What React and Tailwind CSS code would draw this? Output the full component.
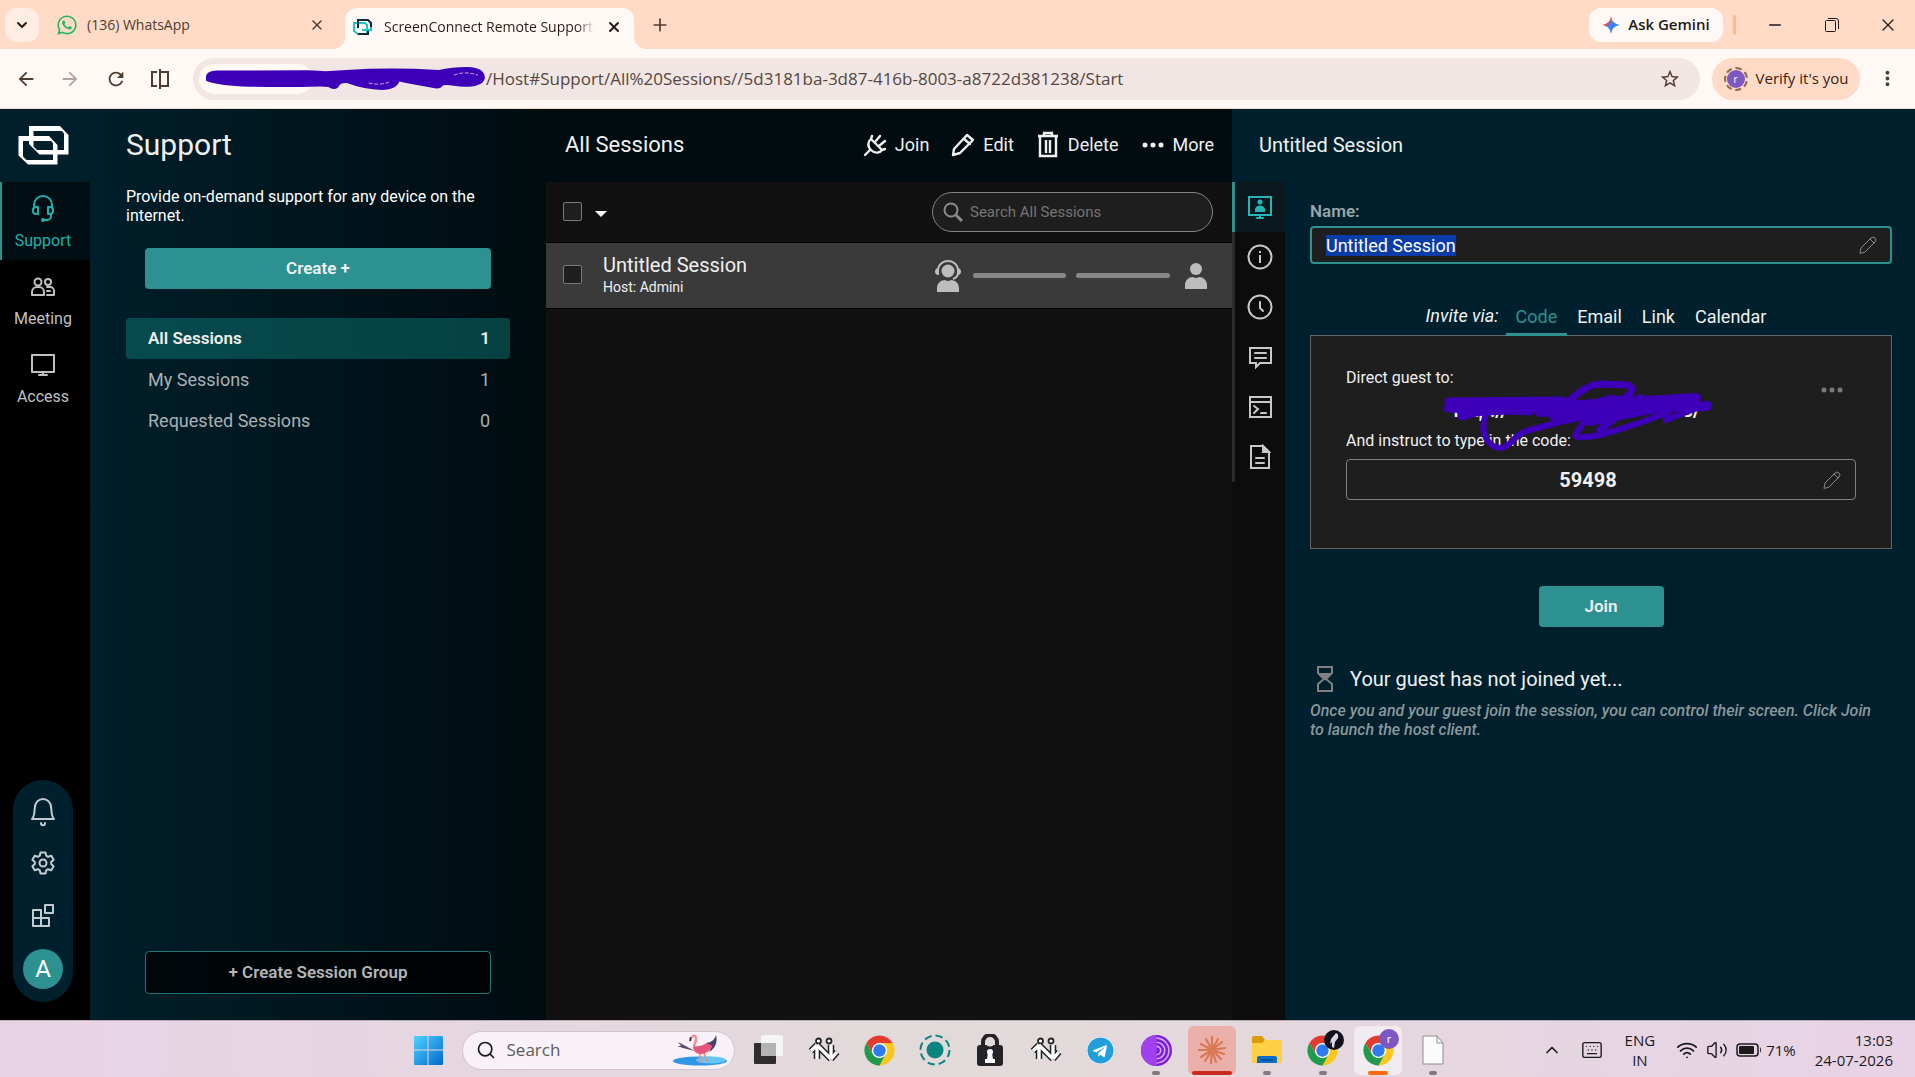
import React, { useEffect, useRef } from 'react';
import { FaWhatsapp, FaTelegram } from 'react-icons/fa';
import { MdStarBorder, MdRefresh, MdArrowBack, MdArrowForward, MdMoreVert } from 'react-icons/md';
import { ChevronDown, ChevronUp, Keyboard, Minus, Plus, Search, Volume2, Wifi, X } from 'lucide-react';

const stroke = { fill: 'none', stroke: 'currentColor', strokeWidth: 2, strokeLinejoin: 'round', strokeLinecap: 'round' };

/* ---------- icons ---------- */

const Logo = () => (
  <svg viewBox="0 0 51 39" className="w-[51px] h-[39px]" fill="#fff" fillRule="evenodd">
    <path d="M11 0H42L50.500 9V28.500H21.500L11 18ZM15.500 5V20.500L19 24H46V7.500L44 5Z" />
    <path d="M.5 10H31L39.500 19V38.500H10L.5 29.500ZM5 15V30.500L8.500 34H35V17L33 15Z" />
  </svg>
);

const HeadsetIcon = () => (
  <svg viewBox="0 0 24 28" className="w-6 h-7" {...stroke}>
    <path d="M3 13V10a9 9 0 0 1 18 0v3" />
    <path d="M7 12H5a3 3 0 0 0-3 3v1a3 3 0 0 0 3 3h2zM17 12h2a3 3 0 0 1 3 3v1a3 3 0 0 1-3 3h-2z" />
    <path d="M20 19v2a4 4 0 0 1-4 4h-4" />
    <circle cx="12" cy="25" r="1" />
  </svg>
);

const MeetingIcon = () => (
  <svg viewBox="0 0 24 20" className="w-6 h-5" {...stroke}>
    <circle cx="7" cy="5" r="3.500" />
    <path d="M1 18v-3a5 5 0 0 1 5-5h2a5 5 0 0 1 5 5v3z" />
    <circle cx="17" cy="5" r="3" />
    <path d="M16 18h7v-4a4 4 0 0 0-4-4h-3M16 14h3" />
  </svg>
);

const MonitorIcon = () => (
  <svg viewBox="0 0 26 24" className="w-[26px] h-6" {...stroke}>
    <path d="M2 2h22v17H2zM13 19v3M9 22h8" />
  </svg>
);

const BellIcon = () => (
  <svg viewBox="0 0 26 30" className="w-[26px] h-[30px]" {...stroke}>
    <path d="M2 22c3-3 2-7 3-12a8 8 0 0 1 16 0c1 5 0 9 3 12z" />
    <path d="M11 26c0 3 4 3 4 0" />
  </svg>
);

const GearIcon = () => (
  <svg viewBox="0 0 24 24" className="w-6 h-6" {...stroke}>
    <path d="M9.500 1.500h5l.7 3.200 1.900 1.100 3.200-1 2.300 4-2.400 2.200v2l2.400 2.200-2.300 4-3.200-1-1.900 1.100-.7 3.200h-5l-.7-3.200-1.900-1.100-3.200 1-2.300-4L3.800 13v-2L1.400 8.800l2.300-4 3.200 1 1.900-1.100z" />
    <circle cx="12" cy="12" r="3.500" />
  </svg>
);

const BlocksIcon = () => (
  <svg viewBox="0 0 24 24" className="w-6 h-6" {...stroke}>
    <path d="M2 7h8v16H2zM2 15h16v8H10M14 2h8v8h-8z" />
  </svg>
);

const PlugIcon = () => (
  <svg viewBox="0 0 24 24" className="w-6 h-6" {...stroke} strokeWidth="2.400">
    <path d="M2 22l5-5M8 17c-4-4-3-9 0-11l11 11c-2 3-7 4-11 0zM8 6L9 3M12 9l5-6M16 13l6-5M19 17l3-1" />
  </svg>
);

const PencilIcon = () => (
  <svg viewBox="0 0 24 24" className="w-6 h-6" {...stroke} strokeWidth="2.400">
    <path d="M2 22l1-6L16 2l6 5L9 20zM13 6l6 5" />
  </svg>
);

const TrashIcon = () => (
  <svg viewBox="0 0 24 28" className="w-6 h-7" {...stroke} strokeWidth="2.400" strokeLinecap="butt" strokeLinejoin="miter">
    <path d="M4 6v19h16V6M2 5h20M8 4V2h8v2M10 9v13M14 9v13" />
  </svg>
);

const DotsIcon = () => (
  <svg viewBox="0 0 24 24" className="w-6 h-6" fill="currentColor">
    <circle cx="4" cy="12" r="2.500" />
    <circle cx="12" cy="12" r="2.500" />
    <circle cx="20" cy="12" r="2.500" />
  </svg>
);

const ThinPencil = () => (
  <svg viewBox="0 0 18 18" className="w-[18px] h-[18px] shrink-0 text-[#8a8a8a]" {...stroke} strokeWidth="1">
    <path d="M1 17l1-5L12 2q2-2 4 0t0 4L6 16zM11 3l4 4" />
  </svg>
);

const PersonIcon = () => (
  <svg viewBox="0 0 24 28" className="w-6 h-7 shrink-0" fill="#bdbdbd">
    <circle cx="12" cy="7" r="6" />
    <path d="M1 27v-4c0-5 4-8 8-8q3 2 6 0c4 0 8 3 8 8v4z" />
  </svg>
);

const HostIcon = () => (
  <svg viewBox="0 0 26 34" className="w-[26px] h-[34px] shrink-0" fill="#bdbdbd">
    <circle cx="13" cy="12" r="6.500" />
    <path d="M2 33v-4c0-5 4-8 8-8q3 2 6 0c4 0 8 3 8 8v4z" />
    <path d="M3 11C4-1 22-1 23 11M23 14q0 4-5 6" fill="none" stroke="#bdbdbd" strokeWidth="2" />
    <path d="M4 9v7q-4 0-4-3.500T4 9zM22 9v7q4 0 4-3.500T22 9z" />
  </svg>
);

const HourglassIcon = () => (
  <svg viewBox="0 0 18 26" className="w-[18px] h-[26px]" fill="none" stroke="#808080" strokeWidth="2">
    <path d="M2 1h14v6l-6 6 6 5v7H2v-7l6-5-6-6z" />
    <path d="M4 8h10l-5 5z" fill="#808080" />
  </svg>
);

const SessionIcon = () => (
  <svg viewBox="0 0 26 26" className="w-[26px] h-[26px]" {...stroke} strokeLinejoin="miter">
    <path d="M2 3h22v18H2zM13 21v3M10 24h6" />
    <circle cx="13" cy="8" r="2.500" fill="currentColor" stroke="none" />
    <path d="M8 18v-2c0-6 10-6 10 0v2z" fill="currentColor" stroke="none" />
  </svg>
);

const InfoIcon = () => (
  <svg viewBox="0 0 26 26" className="w-[26px] h-[26px]" {...stroke}>
    <circle cx="13" cy="13" r="11.500" />
    <path d="M13 11v8M13 7v2" strokeLinecap="butt" />
  </svg>
);

const ClockIcon = () => (
  <svg viewBox="0 0 26 26" className="w-[26px] h-[26px]" {...stroke}>
    <circle cx="13" cy="13" r="11.500" />
    <path d="M13 8v6l3 3" />
  </svg>
);

const ChatIcon = () => (
  <svg viewBox="0 0 26 26" className="w-[26px] h-[26px]" {...stroke} strokeLinejoin="miter">
    <path d="M3 4h21v15H13l-4 4v-4H3zM8 9h11M8 14h11" />
  </svg>
);

const TerminalIcon = () => (
  <svg viewBox="0 0 26 26" className="w-[26px] h-[26px]" {...stroke} strokeLinejoin="miter">
    <path d="M3 3h21v20H3zM3 8h21M7 12l4 3-4 4M14 19h5" />
  </svg>
);

const NoteIcon = () => (
  <svg viewBox="0 0 26 26" className="w-[26px] h-[26px]" {...stroke} strokeLinejoin="miter">
    <path d="M4 2h12l6 6v16H4zM9 14h8M9 19h8" />
    <path d="M16 2v6h6z" fill="currentColor" />
  </svg>
);

const ChromeIcon = () => (
  <svg viewBox="0 0 48 48" className="w-[33px] h-[33px]">
    <circle cx="24" cy="24" r="12" fill="#fff" />
    <path d="M4.950 13A22 22 0 0 1 43.050 13H24A11 11 0 0 0 14.470 29.500Z" fill="#e33b2e" />
    <path d="M4.950 13L14.470 29.500A11 11 0 0 0 33.530 29.500L24 46A22 22 0 0 1 4.950 13Z" fill="#219a4b" />
    <path d="M43.050 13A22 22 0 0 1 24 46L33.530 29.500A11 11 0 0 0 24 13Z" fill="#fdc61c" />
    <circle cx="24" cy="24" r="9" fill="#2f7bee" />
  </svg>
);

const WindowsIcon = () => (
  <svg viewBox="0 0 30 30" className="w-[29px] h-[29px]">
    <defs>
      <linearGradient id="win" gradientUnits="userSpaceOnUse" x1="0" y1="0" x2="30" y2="30">
        <stop offset="0" stopColor="#4fd2ff" />
        <stop offset="1" stopColor="#0069cf" />
      </linearGradient>
    </defs>
    <path d="M0 1q0-1 1-1h13v14H0zM15 0h14q1 0 1 1v13H15zM0 15h14v15H1q-1 0-1-1zM15 15h15v14q0 1-1 1H15z" fill="url(#win)" />
  </svg>
);

const FlamingoArt = () => (
  <svg viewBox="0 0 54 32" className="w-[54px] h-8">
    <ellipse cx="27" cy="27" rx="27" ry="4.500" fill="#2f96e6" />
    <ellipse cx="38" cy="26" rx="15" ry="3.500" fill="#63c6fb" />
    <path d="M27 19v10M31 19l3 9" stroke="#f2896d" strokeWidth="1.500" fill="none" />
    <path d="M19 3q3-3 4 1c1 5-4 6-1 11" stroke="#f28d8f" strokeWidth="2.500" fill="none" />
    <path d="M18 3l-1 4" stroke="#4a3048" strokeWidth="2" />
    <path d="M20 13c6-1 10-1 15-5l4 4c-3 8-12 10-17 6z" fill="#e8557a" />
    <path d="M34 9c5-1 8-4 9-8 2 7-1 14-7 17l3-6z" fill="#474468" />
    <path d="M22 17L5 8l3 4-4 0 6 2z" fill="#5d4a70" />
  </svg>
);

const TaskViewIcon = () => (
  <svg viewBox="0 0 30 30" className="w-[30px] h-[30px]">
    <rect x="0" y="8" width="22" height="21" rx="1" fill="#2f2e2d" />
    <rect x="7" y="0" width="22" height="21" rx="1" fill="#f6f5f5" />
    <rect x="7" y="8" width="15" height="13" fill="#b5b3b2" />
  </svg>
);

const arrowsPath = 'M2 14L8 8M8 8V22M8 8L22 22M22 22V8M22 22L28 15';

const PeopleArrowsIcon = () => (
  <svg viewBox="-1 0 32 26" className="w-8 h-[26px]" fill="none" strokeLinejoin="round">
    <path d={arrowsPath} stroke="#262626" strokeWidth="6.500" />
    <circle cx="9.500" cy="4" r="2.500" fill="#fff" stroke="#262626" strokeWidth="1.800" />
    <circle cx="20" cy="4" r="2.500" fill="#fff" stroke="#262626" strokeWidth="1.800" />
    <path d={arrowsPath} stroke="#fff" strokeWidth="3.400" />
  </svg>
);

const RecorderIcon = () => (
  <svg viewBox="0 0 32 32" className="w-8 h-8">
    <circle cx="16" cy="16" r="8.500" fill="#0b8580" />
    <circle cx="16" cy="16" r="14.500" fill="none" stroke="#0b8580" strokeWidth="2" strokeDasharray="7.400 4" />
  </svg>
);

const LockIcon = () => (
  <svg viewBox="0 0 26 32" className="w-[26px] h-8">
    <path d="M6 14V8a7 7 0 0 1 14 0v6" fill="none" stroke="#242328" strokeWidth="4" />
    <rect x="0" y="11" width="26" height="21" rx="3" fill="#242328" />
    <circle cx="13" cy="8" r="4.500" fill="#e2dad9" />
    <circle cx="13" cy="18" r="3" fill="#fff" />
    <path d="M11 19h4l1 6h2v4H8v-4h2z" fill="#fff" />
  </svg>
);

const TorIcon = () => (
  <svg viewBox="0 0 30 30" className="w-[31px] h-[31px]">
    <circle cx="15" cy="15" r="15" fill="#7a1fd6" />
    <path d="M15 0a15 15 0 0 0 0 30z" fill="#a040ef" />
    <path d="M15 3a12 12 0 0 1 0 24M15 7a8 8 0 0 1 0 16M15 11a4 4 0 0 1 0 8" fill="none" stroke="#d9a8ff" strokeWidth="1.500" />
  </svg>
);

const BurstIcon = () => (
  <svg viewBox="0 0 30 30" className="w-[30px] h-[30px]" stroke="#d97757" strokeWidth="2.200" strokeLinecap="round">
    <path d="M15 15V2M15 15l6-11M15 15l10-8M15 15l13-2M15 15l12 4M15 15l9 9M15 15l4 12M15 15l-1 13M15 15L8 26M15 15L4 22M15 15H2M15 15L4 9M15 15L9 4" />
  </svg>
);

const FolderIcon = () => (
  <svg viewBox="0 0 30 28" className="w-[30px] h-7">
    <path d="M0 2q0-2 2-2h8l3 4h16v10H0z" fill="#dc9c09" />
    <path d="M0 7h10l3-3h15q2 0 2 2v21H0z" fill="#fdcf45" />
    <path d="M5 27v-5q0-2 2-2h16q2 0 2 2v5z" fill="#0d6fc8" />
    <path d="M9 24h12" stroke="#0a4a8c" strokeWidth="1.500" />
  </svg>
);

const PageIcon = () => (
  <svg viewBox="0 0 22 30" className="w-[22px] h-[30px]">
    <path d="M1 1h14l6 7v21H1z" fill="#fbfbfb" stroke="#8c8c8c" />
    <path d="M15 1v7h6" fill="none" stroke="#8c8c8c" />
  </svg>
);

/* ---------- browser ---------- */

const TabStrip = () => (
  <div className="h-[49px] shrink-0 flex items-center bg-[#ffdbc7] pl-[5px]">
    <button aria-label="Search tabs" className="w-[34px] h-[34px] rounded-xl bg-[#ffece2] flex items-center justify-center text-[#2d1600]">
      <ChevronDown className="w-4 h-4" strokeWidth={3} />
    </button>
    <div className="w-[290px] flex items-center pl-[17px] pr-1 text-[#4f3b30]">
      <FaWhatsapp className="w-[22px] h-[22px] text-[#24b562]" />
      <span className="ml-[9px] flex-1 text-[14px]">(136) WhatsApp</span>
      <button aria-label="Close tab"><X className="w-4 h-4" strokeWidth={2} /></button>
    </div>
    <div className="relative self-end ml-4 w-[289px] h-[41px] rounded-t-xl bg-[#fff8f5] flex items-center pl-2 pr-3 pb-1 text-[#2d1b12]">
      <span className="absolute -left-3 bottom-0 w-3 h-3 bg-[radial-gradient(circle_at_0_0,transparent_12px,#fff8f5_12px)]" />
      <span className="absolute -right-3 bottom-0 w-3 h-3 bg-[radial-gradient(circle_at_100%_0,transparent_12px,#fff8f5_12px)]" />
      <svg viewBox="0 0 20 18" className="w-5 h-[18px] shrink-0" fill="none" strokeWidth="2">
        <path d="M1 5h11l2 2v9H5l-4-3z" stroke="#19c5c5" />
        <path d="M5 10V2h10l3 3v7" stroke="#0c2a3a" />
        <path d="M18 9v3H9" stroke="#19c5c5" />
        <path d="M5 16h10v-3" stroke="#0c2a3a" />
      </svg>
      <span className="ml-[11px] w-[210px] overflow-hidden whitespace-nowrap text-[14px] [mask-image:linear-gradient(to_right,#000_92%,transparent)]">
        ScreenConnect Remote Support
      </span>
      <button aria-label="Close tab" className="ml-3"><X className="w-4 h-4" strokeWidth={3} /></button>
    </div>
    <button aria-label="New tab" className="ml-4 text-[#4f3b30]"><Plus className="w-5 h-5" strokeWidth={2} /></button>

    <div className="ml-auto flex items-center text-[#1f1a17]">
      <button className="h-[34px] w-[134px] rounded-xl bg-[#fff8f5] flex items-center justify-center gap-2 text-[15px] font-semibold">
        <svg viewBox="0 0 20 20" className="w-[18px] h-[18px]">
          <defs>
            <linearGradient id="gem" x1="0" y1="0" x2="1" y2="1">
              <stop offset="0.100" stopColor="#f6b31f" />
              <stop offset="0.350" stopColor="#e5484f" />
              <stop offset="0.450" stopColor="#4285f4" />
              <stop offset="0.800" stopColor="#3b80f0" />
            </linearGradient>
          </defs>
          <path d="M10 0q1 9 10 10-9 1-10 10Q9 11 0 10 9 9 10 0z" fill="url(#gem)" />
        </svg>
        Ask Gemini
      </button>
      <span className="ml-[10px] w-[3px] h-5 rounded bg-[#ffb889]" />
      <button aria-label="Minimise" className="w-[57px] ml-[10px] flex justify-center"><Minus className="w-[18px] h-[18px]" strokeWidth={2} /></button>
      <button aria-label="Restore" className="w-[57px] flex justify-center">
        <svg viewBox="0 0 14 14" className="w-[14px] h-[14px]" fill="none" stroke="#1f1a17">
          <rect x="0.500" y="2.500" width="10" height="11" rx="1" />
          <path d="M3 .5h8q2.500 0 2.500 2.500v8" />
        </svg>
      </button>
      <button aria-label="Close" className="w-[55px] flex justify-center"><X className="w-5 h-5" strokeWidth={1.5} /></button>
    </div>
  </div>
);

const AddressBar = () => (
  <div className="h-[60px] shrink-0 flex items-center bg-[#fff8f5] border-b border-[#f0dccf] pl-[15px] text-[#4f3b30]">
    <button aria-label="Back" className="w-[22px]"><MdArrowBack className="w-[22px] h-[22px]" /></button>
    <button aria-label="Forward" className="ml-[22px] text-[#b0a39c]"><MdArrowForward className="w-[22px] h-[22px]" /></button>
    <button aria-label="Reload" className="ml-6"><MdRefresh className="w-[22px] h-[22px]" /></button>
    <button aria-label="Split view" className="ml-[22px]">
      <svg viewBox="0 0 22 22" className="w-[22px] h-[22px]" fill="none" stroke="currentColor" strokeWidth="2">
        <path d="M8 4H3v14h5M11 1v20M11 4h8v14h-8" />
      </svg>
    </button>
    <div className="ml-[22px] flex-1 h-[42px] rounded-full bg-[#f1e6e3] flex items-center pl-[6px] pr-[19px]">
      <div className="relative w-[287px] h-full flex items-center shrink-0">
        <span className="w-[114px] h-[30px] rounded-full bg-[#fff8f5]" />
        <svg viewBox="478 203 638 73" preserveAspectRatio="none" className="absolute left-[7px] top-[9px] w-[279px] h-6">
          <path
            d="M478 232C480 215 495 213 520 214L710 213Q740 215 750 216L800 212Q900 203 1010 212Q1040 203 1075 203C1110 203 1118 225 1115 240C1110 262 1075 268 1045 260Q1020 255 1018 262Q1012 272 995 266Q950 255 920 247Q915 270 880 273Q840 272 800 252Q785 250 780 265Q770 276 758 264L740 262Q650 266 560 262Q500 258 478 245Z"
            fill="#3d00b8"
          />
          <path d="M1045 228q25-14 55 0M850 252q30 8 50-5" fill="none" stroke="#efe4e4" strokeWidth="2" strokeDasharray="9 4" />
        </svg>
      </div>
      <input
        aria-label="Address"
        readOnly
        value="/Host#Support/All%20Sessions//5d3181ba-3d87-416b-8003-a8722d381238/Start"
        className="flex-1 min-w-0 bg-transparent text-[17px] text-[#55463f] outline-none"
      />
      <button aria-label="Bookmark"><MdStarBorder className="w-[22px] h-[22px]" /></button>
    </div>
    <button className="ml-3 h-[42px] w-[148px] rounded-full bg-[#ffdbc7] flex items-center justify-center gap-2 text-[15px] text-[#38200f] whitespace-nowrap">
      <span className="w-6 h-6 rounded-full border-2 border-dashed border-[#8f6a50] flex items-center justify-center shrink-0">
        <span className="w-[18px] h-[18px] rounded-full bg-[#7e57c2] text-white text-[10px] leading-[18px] shrink-0">r</span>
      </span>
      Verify it's you
    </button>
    <button aria-label="Menu" className="ml-4 mr-4"><MdMoreVert className="w-[23px] h-[23px]" /></button>
  </div>
);

/* ---------- app ---------- */

const navItems = [
  { label: 'Support', icon: HeadsetIcon, active: true },
  { label: 'Meeting', icon: MeetingIcon },
  { label: 'Access', icon: MonitorIcon },
];

const NavRail = () => (
  <nav className="bg-black flex flex-col items-center">
    <div className="h-[73px] w-full bg-[#001f2b] flex items-center pl-[18px]">
      <Logo />
    </div>
    {navItems.map(({ label, icon: Icon, active }) => (
      <a
        key={label}
        href="#"
        className={`h-[78px] w-full flex flex-col items-center pr-[6px] pt-3 border-l-2 ${
          active ? 'border-[#2d9192] bg-[#010f14] text-[#1fb0ad]' : 'border-transparent text-[#c0c0c0]'
        }`}
      >
        <span className="h-[30px] flex items-center"><Icon /></span>
        <span className="mt-[7px] text-[16px] leading-5">{label}</span>
      </a>
    ))}
    <div className="mt-auto mb-[18px] mr-1 w-[60px] h-[222px] rounded-full bg-[#00202d] flex flex-col items-center pt-[17px] text-[#c3ccd0]">
      <button aria-label="Notifications"><BellIcon /></button>
      <button aria-label="Settings" className="mt-6"><GearIcon /></button>
      <button aria-label="Extensions" className="mt-7"><BlocksIcon /></button>
      <button className="mt-[22px] w-10 h-10 rounded-full bg-[#2d9192] text-white text-[24px] leading-10">A</button>
    </div>
  </nav>
);

const groups = [
  { name: 'All Sessions', count: 1, active: true },
  { name: 'My Sessions', count: 1 },
  { name: 'Requested Sessions', count: 0 },
];

const SupportPanel = () => (
  <aside className="flex flex-col pl-9 pr-[35px] bg-linear-to-r from-[#001f2b] to-[#000c10]">
    <h1 className="h-[73px] flex items-center pb-[2px] text-[30px] text-[#f0f0f0]">Support</h1>
    <p className="mt-[5px] text-[16px] leading-[19px] text-white">Provide on-demand support for any device on the internet.</p>
    <button className="mt-[23px] mx-[19px] h-[41px] rounded bg-[#2d9192] text-[17px] font-semibold text-[#f0f0f0]">Create +</button>
    <ul className="mt-[29px]">
      {groups.map((group) => (
        <li key={group.name}>
          <a
            href="#"
            className={`h-[41px] rounded flex items-center justify-between pl-[22px] pr-5 ${
              group.active ? 'bg-[#0f8a85]/42 text-[17px] font-semibold text-[#f0f0f0]' : 'text-[18px] text-[#a9b0b3]'
            }`}
          >
            <span>{group.name}</span>
            <span>{group.count}</span>
          </a>
        </li>
      ))}
    </ul>
    <button className="mt-auto mb-[26px] mx-[19px] h-[43px] rounded border border-[#1f7475] bg-black/75 text-[17px] font-semibold text-[#b5b5b5]">
      + Create Session Group
    </button>
  </aside>
);

const commands = [
  { label: 'Join', icon: PlugIcon },
  { label: 'Edit', icon: PencilIcon },
  { label: 'Delete', icon: TrashIcon },
  { label: 'More', icon: DotsIcon },
];

const checkboxClass = 'appearance-none block w-[19px] h-[19px] mb-[2px] rounded-xs border border-[#7a7a7a] bg-[#1e1e1e]';

const SessionList = () => (
  <main className="flex flex-col bg-[#000c10] text-[#f0f0f0]">
    <div className="h-[73px] flex items-center justify-between pb-[2px] pl-5 pr-[18px]">
      <h2 className="text-[22px]">All Sessions</h2>
      <div className="flex gap-[22px] text-[18px]">
        {commands.map(({ label, icon: Icon }) => (
          <button key={label} className="flex items-center gap-2"><Icon />{label}</button>
        ))}
      </div>
    </div>
    <div className="flex-1 ml-px bg-[#111]">
      <div className="h-[61px] flex items-center pl-[17px] pr-[19px] border-b border-black">
        <input type="checkbox" aria-label="Select all sessions" className={checkboxClass} />
        <button aria-label="Selection options" className="ml-[13px]">
          <svg viewBox="0 0 12 6" className="w-3 h-[6px] mt-1" fill="#fff"><path d="M0 0h12L6 6z" /></svg>
        </button>
        <label className="ml-auto w-[281px] h-10 rounded-full border border-[#858585] bg-[#1e1e1e] flex items-center pl-[10px] text-[#8c8c8c]">
          <svg viewBox="0 0 20 20" className="w-5 h-5 shrink-0" fill="none" stroke="currentColor">
            <circle cx="8" cy="8" r="6.500" strokeWidth="2" />
            <path d="M13 13l6 6" strokeWidth="3" />
          </svg>
          <input aria-label="Search All Sessions" placeholder="Search All Sessions" className="ml-[7px] min-w-0 flex-1 bg-transparent text-[15px] outline-none placeholder:text-[#757575]" />
        </label>
      </div>
      <div className="h-[66px] flex items-center pl-[17px] pr-6 bg-[#3a3a3a] border-b border-black">
        <input type="checkbox" aria-label="Select Untitled Session" className={checkboxClass} />
        <div className="ml-[21px] pb-[2px]">
          <div className="text-[20px] leading-6">Untitled Session</div>
          <div className="text-[14px] leading-5">Host: Admini</div>
        </div>
        <div className="ml-auto flex items-center">
          <HostIcon />
          <span className="ml-3 w-[93px] h-[5px] rounded-full bg-[#888]" />
          <span className="ml-[10px] mr-[14px] w-[94px] h-[5px] rounded-full bg-[#888]" />
          <PersonIcon />
        </div>
      </div>
    </div>
  </main>
);

const detailTabs = [
  { label: 'Start', icon: SessionIcon, active: true },
  { label: 'General', icon: InfoIcon },
  { label: 'Timeline', icon: ClockIcon },
  { label: 'Messages', icon: ChatIcon },
  { label: 'Commands', icon: TerminalIcon },
  { label: 'Notes', icon: NoteIcon },
];

const inviteTabs = ['Code', 'Email', 'Link', 'Calendar'];

const SessionDetail = () => {
  const nameRef = useRef(null);

  useEffect(() => {
    nameRef.current.focus();
    nameRef.current.select();
  }, []);

  return (
    <section className="flex flex-col bg-[#00202d] text-[#f0f0f0]">
      <h2 className="h-[73px] flex items-center pb-[2px] pl-[27px] text-[20px]">Untitled Session</h2>
      <div className="flex-1 flex">
        <div className="w-[53px] bg-[#0c0c0c] shrink-0">
          {detailTabs.map(({ label, icon: Icon, active }) => (
            <button
              key={label}
              aria-label={label}
              className={`w-full h-[50px] flex items-center justify-center border-l-3 ${
                active ? 'border-[#2d9192] bg-[#0b191e] text-[#25b5b5]' : 'border-[#2b2b2b] text-[#c8c8c8]'
              }`}
            >
              <Icon />
            </button>
          ))}
        </div>
        <div className="flex-1 min-w-0 pl-[25px] pr-[23px] pt-[18px]">
          <label htmlFor="session-name" className="block text-[17px] leading-[22px] font-semibold text-[#9aa5a9]">Name:</label>
          <div className="mt-1 h-[38px] rounded border-2 border-[#2d9192] bg-[#1e1e1e] flex items-center pl-[14px] pr-[13px]">
            <input
              id="session-name"
              ref={nameRef}
              defaultValue="Untitled Session"
              className="flex-1 min-w-0 bg-transparent text-[18px] leading-[21px] outline-none selection:bg-[#0a3ca8] selection:text-white"
            />
            <ThinPencil />
          </div>

          <div className="mt-[34px] h-[38px] flex justify-center text-[18px]">
            <span className="italic leading-9 pr-[7px]">Invite via:</span>
            {inviteTabs.map((tab) => (
              <button
                key={tab}
                className={`px-[10px] pt-[2px] relative z-10 border-b-3 ${tab === 'Code' ? 'text-[#2d9192] border-[#2d9192]' : 'border-transparent'}`}
              >
                {tab}
              </button>
            ))}
          </div>
          <div className="-mt-px h-[214px] border border-[#666] bg-[#1e1e1e] px-[35px] pt-8">
            <div className="flex">
              <div className="flex-1 text-[16px] leading-5">
                <p>Direct guest to:</p>
                <div className="relative h-[43px] flex items-center justify-center">
                  <span className="text-[20px] font-bold whitespace-pre">http://                              .    s/</span>
                  <svg viewBox="0 0 275 72" className="absolute left-[94px] -top-2 w-[275px] h-[72px]" fill="none" stroke="#3d00b8" strokeLinecap="round" strokeLinejoin="round">
                    <path d="M9 22L123 21M8 28L90 31M22 36L50 28" strokeWidth="9" />
                    <path d="M22 32L256 18M100 32L267 26M114 36L170 20L230 26L180 34L130 34" strokeWidth="10" />
                    <path d="M123 27Q145 4 161 4L188 5Q194 7 190 14L160 36" strokeWidth="7" />
                    <path d="M46 34C38 54 50 68 60 68C74 66 72 54 90 50L120 42L148 36L136 54Q132 60 160 55Q200 44 228 32L226 40L262 26" strokeWidth="6" />
                    <path d="M160 50L200 18L220 28L150 42" strokeWidth="8" />
                  </svg>
                </div>
                <p>And instruct to type in the code:</p>
              </div>
              <button aria-label="Code options" className="w-12 h-6 mt-[10px] flex justify-center text-[#7a7a7a]"><DotsIcon /></button>
            </div>
            <div className="mt-2 h-[41px] rounded border border-[#808080] flex items-center px-[14px]">
              <input aria-label="Code" defaultValue="59498" className="flex-1 min-w-0 bg-transparent text-center text-[20px] font-bold outline-none pr-[8px]" />
              <ThinPencil />
            </div>
          </div>

          <div className="mt-[37px] flex justify-center">
            <button className="w-[125px] h-[41px] rounded bg-[#2d9192] text-[17px] font-semibold">Join</button>
          </div>
          <div className="mt-[39px] flex items-center pl-[6px] gap-4">
            <HourglassIcon />
            <span className="text-[20px] leading-[26px]">Your guest has not joined yet...</span>
          </div>
          <p className="mt-[9px] pr-3 text-[16px] leading-[19px] italic font-medium text-[#8a979c]">
            Once you and your guest join the session, you can control their screen. Click Join to launch the host client.
          </p>
        </div>
      </div>
    </section>
  );
};

/* ---------- taskbar ---------- */

const profileDark = (
  <span className="absolute right-[3px] top-1 w-5 h-5 rounded-full bg-[#12121f] flex items-center justify-center">
    <svg viewBox="0 0 20 20" className="w-5 h-5" fill="#d8d8dd"><path d="M12 3q3 1 2 5l-3 4-1 6-2-1v-5L6 14l1-5z" /></svg>
  </span>
);

const profileR = (
  <span className="absolute right-[3px] top-[3px] w-5 h-5 rounded-full bg-[#7e57c2] text-white text-[11px] leading-5">r</span>
);

const taskItems = [
  { label: 'Task view', icon: <TaskViewIcon /> },
  { label: 'Remote client', icon: <PeopleArrowsIcon /> },
  { label: 'Chrome', icon: <ChromeIcon /> },
  { label: 'Recorder', icon: <RecorderIcon /> },
  { label: 'Lock', icon: <LockIcon /> },
  { label: 'Remote client 2', icon: <PeopleArrowsIcon /> },
  { label: 'Telegram', icon: <FaTelegram className="w-[27px] h-[27px] rounded-full bg-white text-[#229fdb]" /> },
  { label: 'Tor', icon: <TorIcon />, mark: 'w-2 bg-[#827a80]' },
  { label: 'Claude', icon: <BurstIcon />, tile: 'bg-[#ebafaa]', mark: 'w-10 bg-[#c92a1e]' },
  { label: 'Files', icon: <FolderIcon />, mark: 'w-2 bg-[#827a80]' },
  { label: 'Chrome profile 1', icon: <ChromeIcon />, badge: profileDark, mark: 'w-2 bg-[#827a80]' },
  { label: 'Chrome profile 2', icon: <ChromeIcon />, badge: profileR, tile: 'bg-[#f2ebf0]', mark: 'w-5 bg-[#ff6a0a]' },
  { label: 'Document', icon: <PageIcon />, mark: 'w-2 bg-[#827a80]' },
];

const Taskbar = () => (
  <footer className="h-[57px] shrink-0 grid grid-cols-[400fr_auto_458fr] items-center pt-[2px] border-t border-[#b9aeb8] bg-linear-to-r from-[#e8d3e6] via-[#e2dad9] to-[#e8d3e6] text-[#1b1b1b]">
    <div />
    <div className="flex items-center">
      <button aria-label="Start" className="w-[57px] flex justify-center"><WindowsIcon /></button>
      <label className="ml-[5px] w-[273px] h-[39px] rounded-full border border-[#d3c4d1] bg-[#f8f2f8] flex items-center pl-[13px] pr-[7px]">
        <Search className="w-5 h-5 shrink-0" strokeWidth={2} />
        <input aria-label="Search" placeholder="Search" className="ml-[11px] min-w-0 flex-1 bg-transparent text-[17px] outline-none placeholder:text-[#5c5a5c]" />
        <FlamingoArt />
      </label>
      <div className="ml-[10px] w-[713px] flex justify-between">
        {taskItems.map((item) => (
          <button key={item.label} aria-label={item.label} className={`relative w-12 h-[49px] rounded-md flex items-center justify-center ${item.tile || ''}`}>
            {item.icon}
            {item.badge}
            {item.mark && <span className={`absolute bottom-0 h-1 rounded-full ${item.mark}`} />}
          </button>
        ))}
      </div>
    </div>
    <div className="flex items-center justify-end pr-[22px] text-[15px] leading-5">
      <ChevronUp className="w-5 h-5" strokeWidth={2} />
      <Keyboard className="ml-[19px] w-[22px] h-[22px]" strokeWidth={1.5} />
      <div className="ml-[22px] text-center">ENG<br />IN</div>
      <Wifi className="ml-[21px] w-[22px] h-[22px]" strokeWidth={2} />
      <Volume2 className="ml-2 w-[22px] h-[22px]" strokeWidth={1.5} />
      <svg viewBox="0 0 26 14" className="ml-2 w-[26px] h-[14px]">
        <rect x="1" y="1" width="21" height="12" rx="3" fill="none" stroke="#1b1b1b" strokeWidth="1.500" />
        <rect x="3" y="3" width="15" height="8" rx="1" fill="#1b1b1b" />
        <path d="M24 4q2 3 0 6z" fill="#1b1b1b" />
      </svg>
      <span className="ml-1">71%</span>
      <div className="ml-[19px] text-right">13:03<br />24-07-2026</div>
    </div>
  </footer>
);

const App = () => (
  <div className="h-screen flex flex-col overflow-hidden font-['Open_Sans',sans-serif]">
    <TabStrip />
    <AddressBar />
    <div className="flex-1 min-h-0 grid grid-cols-[90px_455px_minmax(0,687fr)_minmax(0,683fr)] font-['Roboto',sans-serif]">
      <NavRail />
      <SupportPanel />
      <SessionList />
      <SessionDetail />
    </div>
    <Taskbar />
  </div>
);

export default App;
